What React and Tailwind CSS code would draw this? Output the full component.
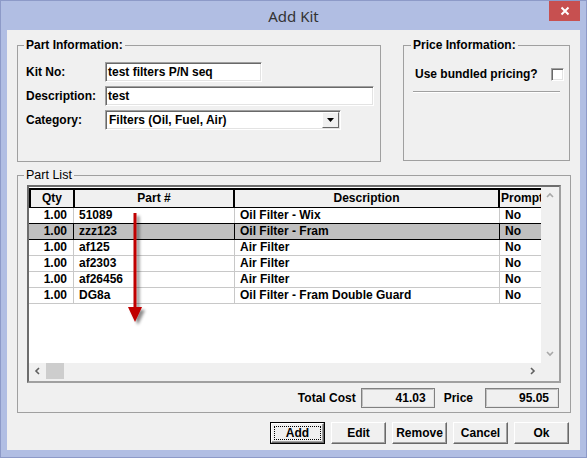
import React from 'react'

const rows = [
  ['1.00', '51089', 'Oil Filter - Wix', 'No'],
  ['1.00', 'zzz123', 'Oil Filter - Fram', 'No'],
  ['1.00', 'af125', 'Air Filter', 'No'],
  ['1.00', 'af2303', 'Air Filter', 'No'],
  ['1.00', 'af26456', 'Air Filter', 'No'],
  ['1.00', 'DG8a', 'Oil Filter - Fram Double Guard', 'No'],
]

const SELECTED = 1

const sunken =
  'border border-t-[#a0a0a0] border-l-[#a0a0a0] border-b-white border-r-white shadow-[inset_1px_1px_0_#696969,inset_-1px_-1px_0_#e3e3e3]'

const Button = ({ label, isDefault }) => (
  <div className={'w-[55px] h-[22px] ' + (isDefault ? 'border border-black' : '')}>
    <div className="w-full h-full border border-t-white border-l-white border-b-[#696969] border-r-[#696969] shadow-[inset_-1px_-1px_0_#a0a0a0] flex p-[2px]">
      <div
        className={
          'flex-1 flex items-center justify-center ' +
          (isDefault ? 'border border-dotted border-black' : '')
        }
      >
        {label}
      </div>
    </div>
  </div>
)

const Chevron = ({ dir, color }) => {
  const d = {
    up: 'M1 5 L4 2 L7 5',
    down: 'M1 2 L4 5 L7 2',
    left: 'M5 1 L2 4 L5 7',
    right: 'M2 1 L5 4 L2 7',
  }[dir]
  return (
    <svg width="8" height="8" viewBox="0 0 8 8">
      <path d={d} fill="none" stroke={color} strokeWidth="1.6" />
    </svg>
  )
}

export default function App() {
  return (
    <div className="relative w-[587px] h-[458px] bg-[#b1bee3] border border-[#8d9ac8] flex flex-col font-['Liberation_Sans',Arial,sans-serif] text-[12px] font-bold text-black overflow-hidden">
      {/* title bar */}
      <div className="h-[29px] grid grid-cols-[1fr_auto_1fr] items-start">
        <div />
        <div className="pt-[5px] font-['Noto_Sans',sans-serif] font-normal text-[15px] leading-[20px] text-[#333]">
          Add Kit
        </div>
        <div className="flex justify-end pr-[6px]">
          <div className="w-[31px] h-[20px] bg-[#c75050] flex items-center justify-center">
            <svg width="10" height="10" viewBox="0 0 10 10">
              <path d="M1.5 1.5 L8.5 8.5 M8.5 1.5 L1.5 8.5" stroke="white" strokeWidth="2" />
            </svg>
          </div>
        </div>
      </div>

      {/* client area */}
      <div className="mx-[6px] w-[573px] h-[420px] bg-[#f0f0f0] px-[10px] pt-[8px] flex flex-col">
        <div className="flex gap-[22px]">
          {/* Part Information */}
          <fieldset className="w-[364px] h-[124px] border border-[#a0a0a0]">
            <legend className="ml-[6px] px-[2px] leading-[14px]">Part Information:</legend>
            <div className="pl-[8px] pt-[10px] flex flex-col gap-[4px]">
              <div className="flex items-center">
                <div className="w-[79px]">Kit No:</div>
                <div className={'w-[157px] h-[20px] bg-white flex items-center pl-[2px] ' + sunken}>
                  test filters P/N seq
                </div>
              </div>
              <div className="flex items-center">
                <div className="w-[79px]">Description:</div>
                <div className={'w-[269px] h-[20px] bg-white flex items-center pl-[2px] ' + sunken}>
                  test
                </div>
              </div>
              <div className="flex items-center">
                <div className="w-[79px]">Category:</div>
                <div className={'w-[236px] h-[20px] bg-white flex items-center pl-[3px] pr-[1px] ' + sunken}>
                  <span className="flex-1">Filters (Oil, Fuel, Air)</span>
                  <div className="w-[17px] h-[16px] bg-[#f0f0f0] border border-t-white border-l-white border-b-[#696969] border-r-[#696969] flex items-center justify-center">
                    <svg width="7" height="4" viewBox="0 0 7 4">
                      <path d="M0 0 L7 0 L3.5 4 Z" fill="black" />
                    </svg>
                  </div>
                </div>
              </div>
            </div>
          </fieldset>

          {/* Price Information */}
          <fieldset className="w-[167px] h-[123px] border border-[#a0a0a0]">
            <legend className="ml-[7px] px-[2px] leading-[14px]">Price Information:</legend>
            <div className="pl-[11px] pr-[5px] pt-[13px] flex items-center justify-between">
              <span>Use bundled pricing?</span>
              <div className={'w-[13px] h-[13px] bg-white ' + sunken} />
            </div>
            <div className="mx-[9px] mt-[8px] h-[2px] border-t border-[#a0a0a0] border-b border-b-white" />
          </fieldset>
        </div>

        {/* Part List */}
        <fieldset className="mt-[5px] w-[554px] h-[246px] border border-[#a0a0a0]">
          <legend className="ml-[6px] px-[2px] leading-[16px] font-normal text-[12.5px]">Part List</legend>
          <div className="pl-[9px] pr-[8px]">
            <div className="mt-[2px] w-[534px] h-[198px] border-2 border-t-[#6d6d6d] border-l-[#6d6d6d] border-b-[#a0a0a0] border-r-[#a0a0a0] flex flex-col">
              <div className="h-[176px] flex">
                {/* table */}
                <div className="w-[512px] h-full bg-white pt-px overflow-hidden">
                  <div className="flex h-[20px] w-[560px] bg-[#f0f0f0] border-t-2 border-b border-black">
                    <div className="w-[46px] shrink-0 border-l-2 border-r-2 border-black text-center leading-[17px]">Qty</div>
                    <div className="w-[160px] shrink-0 border-r-2 border-black text-center leading-[17px]">Part #</div>
                    <div className="w-[265px] shrink-0 border-r-2 border-black text-center leading-[17px]">Description</div>
                    <div className="w-[60px] shrink-0 border-r-2 border-black pl-px leading-[17px]">Prompt</div>
                  </div>
                  {rows.map((r, i) => {
                    const sel = i === SELECTED
                    const lineB = i === SELECTED || i === SELECTED - 1 ? 'border-black' : 'border-[#c8c8c8]'
                    const lineR = sel ? 'border-black' : 'border-[#c8c8c8]'
                    return (
                      <div
                        key={i}
                        className={'flex h-[16px] w-[560px] border-b ' + lineB + (sel ? ' bg-[#c0c0c0]' : '')}
                      >
                        <div className={'w-[45px] shrink-0 border-r text-right pr-[6px] leading-[15px] ' + lineR}>{r[0]}</div>
                        <div className={'w-[161px] shrink-0 border-r pl-[5px] leading-[15px] ' + lineR}>{r[1]}</div>
                        <div className={'w-[265px] shrink-0 border-r pl-[5px] leading-[15px] ' + lineR}>{r[2]}</div>
                        <div className={'w-[60px] shrink-0 border-r pl-[5px] leading-[15px] ' + lineR}>{r[3]}</div>
                      </div>
                    )
                  })}
                </div>
                {/* vertical scrollbar */}
                <div className="w-[18px] h-full bg-[#f0f0f0] flex flex-col justify-between items-center pt-[5px] pb-[5px]">
                  <Chevron dir="up" color="#a8a8a8" />
                  <Chevron dir="down" color="#a8a8a8" />
                </div>
              </div>
              {/* horizontal scrollbar */}
              <div className="h-[18px] bg-[#f0f0f0] flex items-start">
                <div className="w-[512px] h-[16px] flex items-center">
                  <div className="w-[17px] flex justify-center">
                    <Chevron dir="left" color="#606060" />
                  </div>
                  <div className="w-[18px] h-[16px] bg-[#cdcdcd]" />
                  <div className="flex-1" />
                  <div className="w-[17px] flex justify-center">
                    <Chevron dir="right" color="#606060" />
                  </div>
                </div>
              </div>
            </div>

            {/* totals */}
            <div className="mt-[5px] flex items-center justify-end pr-[3px]">
              <span className="mr-[5px]">Total Cost</span>
              <div className="w-[74px] h-[20px] border border-[#808080] shadow-[inset_-1px_-1px_0_#e3e3e3,inset_1px_1px_0_#c0c0c0] flex items-center justify-end pr-[8px]">
                41.03
              </div>
              <span className="ml-[9px] mr-[12px]">Price</span>
              <div className="w-[74px] h-[20px] border border-[#808080] shadow-[inset_-1px_-1px_0_#e3e3e3,inset_1px_1px_0_#c0c0c0] flex items-center justify-end pr-[9px]">
                95.05
              </div>
            </div>
          </div>
        </fieldset>

        {/* buttons */}
        <div className="mt-[9px] flex justify-end gap-[6px] pr-[1px]">
          <Button label="Add" isDefault />
          <Button label="Edit" />
          <Button label="Remove" />
          <Button label="Cancel" />
          <Button label="Ok" />
        </div>
      </div>

      {/* red annotation arrow */}
      <svg className="absolute left-[122px] top-[208px]" width="28" height="120" viewBox="0 0 28 120">
        <defs>
          <filter id="sh" x="-50%" y="-20%" width="200%" height="140%">
            <feDropShadow dx="3" dy="3" stdDeviation="1.8" floodColor="#000" floodOpacity="0.45" />
          </filter>
        </defs>
        <g filter="url(#sh)">
          <rect x="10.5" y="4" width="3" height="96" fill="#c00000" />
          <path d="M5 98 L19 98 L12 113 Z" fill="#c00000" />
        </g>
      </svg>
    </div>
  )
}
